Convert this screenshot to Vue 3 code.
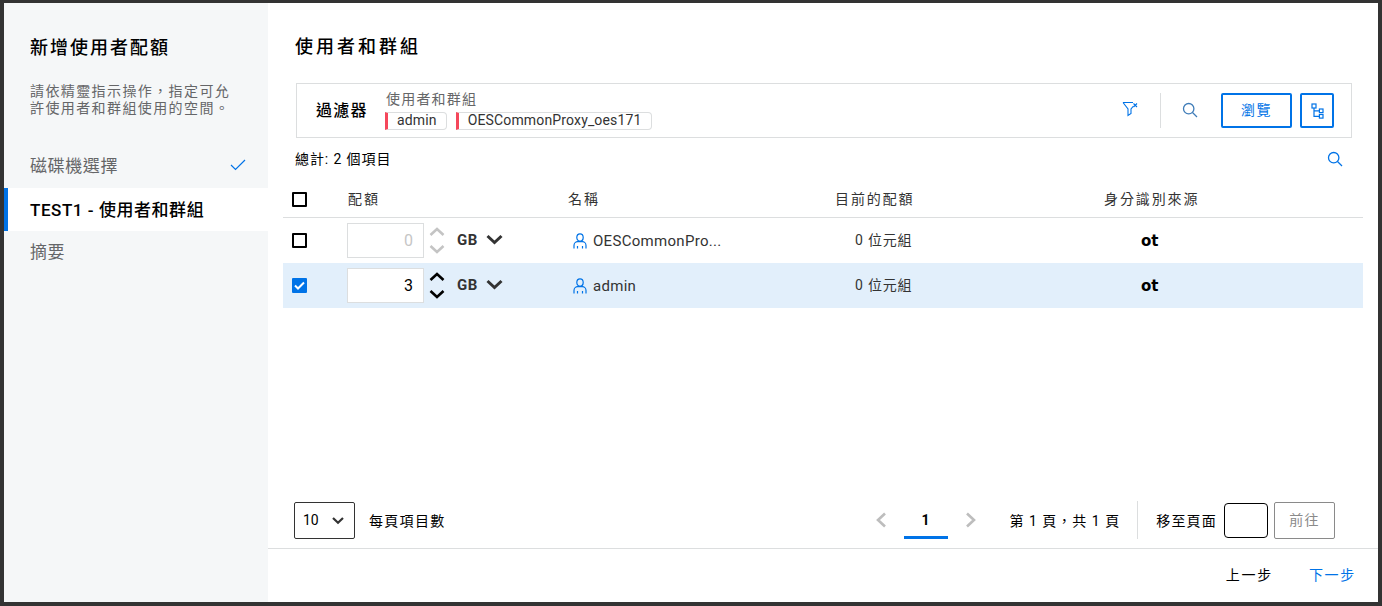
<template>
  <div class="backdrop">
    <div class="modal">
      <aside class="side">
        <h2 class="side-title">新增使用者配額</h2>
        <p class="side-desc">請依精靈指示操作，指定可允許使用者和群組使用的空間。</p>
        <nav class="steps">
          <div class="step">
            <span>磁碟機選擇</span>
            <svg class="step-check" width="16" height="12" viewBox="0 0 16 12"><path d="M1 6 L5.5 10.5 L15 1" fill="none" stroke="#0073e7" stroke-width="1.2"/></svg>
          </div>
          <div class="step active">TEST1 - 使用者和群組</div>
          <div class="step">摘要</div>
        </nav>
      </aside>

      <main class="main">
        <div class="content">
          <h1 class="title">使用者和群組</h1>

          <div class="filter">
            <div class="filter-label">過濾器</div>
            <div class="filter-body">
              <div class="filter-name">使用者和群組</div>
              <div class="chips">
                <span v-for="c in chips" :key="c" class="chip">{{ c }}</span>
              </div>
            </div>
            <div class="filter-tools">
              <svg class="tool-funnel" width="16" height="16" viewBox="0 0 16 16" fill="none" stroke="#0073e7" stroke-width="1.1">
                <path d="M1 1.5 H11 M1 1.5 L6 8 V14.5 L9 12.5 V8 L11.5 5"/>
                <path d="M11.5 2.5 L15 6 M15 2.5 L11.5 6"/>
              </svg>
              <span class="tool-sep"></span>
              <svg class="tool-search" width="16" height="16" viewBox="0 0 16 16" fill="none" stroke="#3f7cb8" stroke-width="1.3">
                <circle cx="6.7" cy="6.7" r="5.2"/><path d="M10.5 10.5 L15 15"/>
              </svg>
              <button class="btn-outline browse">瀏覽</button>
              <button class="btn-outline tree">
                <svg width="13" height="16" viewBox="0 0 13 16" fill="none" stroke="#0073e7" stroke-width="1.2">
                  <rect x="1" y="1" width="4" height="4"/><rect x="8.4" y="6" width="3.6" height="3.6"/><rect x="8.4" y="11.5" width="3.6" height="3.6"/>
                  <path d="M3 5 V13.3 H8.4 M3 7.8 H8.4"/>
                </svg>
              </button>
            </div>
          </div>

          <div class="count-row">
            <span>總計: 2 個項目</span>
            <svg width="16" height="16" viewBox="0 0 16 16" fill="none" stroke="#0073e7" stroke-width="1.3">
              <circle cx="6.7" cy="6.7" r="5.2"/><path d="M10.5 10.5 L15 15"/>
            </svg>
          </div>

          <div class="table">
            <div class="row head">
              <div class="c-check"><span class="box"></span></div>
              <div class="c-quota">配額</div>
              <div class="c-name">名稱</div>
              <div class="c-current">目前的配額</div>
              <div class="c-source">身分識別來源</div>
            </div>
            <div v-for="r in rows" :key="r.name" class="row" :class="{ selected: r.checked }">
              <div class="c-check">
                <span class="box" :class="{ on: r.checked }">
                  <svg v-if="r.checked" width="11" height="9" viewBox="0 0 11 9"><path d="M1 4.5 L4 7.5 L10 1.5" fill="none" stroke="#fff" stroke-width="2"/></svg>
                </span>
              </div>
              <div class="c-quota quota">
                <span class="num" :class="{ off: !r.checked }">{{ r.quota }}</span>
                <span class="spin" :class="{ off: !r.checked }">
                  <svg width="16" height="10" viewBox="0 0 16 10"><path d="M1.5 8 L8 2 L14.5 8" fill="none" stroke="currentColor" stroke-width="2.6"/></svg>
                  <svg width="16" height="10" viewBox="0 0 16 10"><path d="M1.5 2 L8 8 L14.5 2" fill="none" stroke="currentColor" stroke-width="2.6"/></svg>
                </span>
                <span class="unit">GB</span>
                <svg class="unit-arrow" width="17" height="11" viewBox="0 0 17 11"><path d="M1.5 2 L8.5 8.5 L15.5 2" fill="none" stroke="#333" stroke-width="3"/></svg>
              </div>
              <div class="c-name name">
                <svg width="14" height="16" viewBox="0 0 14 16" fill="none" stroke="#0073e7" stroke-width="1.2">
                  <ellipse cx="7" cy="4.5" rx="3.2" ry="3.7"/>
                  <path d="M1 15.5 V12.5 C1 10 3 8.6 4.6 8.6 H9.4 C11 8.6 13 10 13 12.5 V15.5 M4.5 15.5 V13 M9.5 15.5 V13"/>
                </svg>
                <span>{{ r.name }}</span>
              </div>
              <div class="c-current used">0 位元組</div>
              <div class="c-source source">ot</div>
            </div>
          </div>

          <div class="pager">
            <div class="per-page">
              <div class="select">
                <span>10</span>
                <svg width="14" height="9" viewBox="0 0 14 9"><path d="M2 2 L7 6.8 L12 2" fill="none" stroke="#333" stroke-width="2.2"/></svg>
              </div>
              <span>每頁項目數</span>
            </div>
            <div class="pages">
              <svg width="12" height="16" viewBox="0 0 12 16"><path d="M10 1.5 L3 8 L10 14.5" fill="none" stroke="#bdbdbd" stroke-width="2.6"/></svg>
              <span class="page-cur">1</span>
              <svg width="12" height="16" viewBox="0 0 12 16"><path d="M2 1.5 L9 8 L2 14.5" fill="none" stroke="#bdbdbd" stroke-width="2.6"/></svg>
              <span class="page-of">第 1 頁，共 1 頁</span>
              <span class="page-sep"></span>
              <span class="goto-label">移至頁面</span>
              <span class="goto-input"></span>
              <button class="goto-btn">前往</button>
            </div>
          </div>
        </div>

        <footer class="foot">
          <span class="back">上一步</span>
          <span class="next">下一步</span>
        </footer>
      </main>
    </div>
  </div>
</template>

<script setup>
const chips = ['admin', 'OESCommonProxy_oes171']

const rows = [
  { name: 'OESCommonPro...', quota: 0, checked: false },
  { name: 'admin', quota: 3, checked: true }
]
</script>

<style>
html, body { margin: 0; }
</style>

<style scoped>
.backdrop {
  width: 1382px;
  height: 606px;
  box-sizing: border-box;
  padding: 3px 4px 4px 4px;
  background: #333;
  font-family: Roboto, "Noto Sans CJK TC", sans-serif;
  font-size: 14px;
  color: #000;
  overflow: hidden;
}
.modal {
  display: flex;
  height: 599px;
  background: #fff;
}
.side {
  width: 264px;
  flex-shrink: 0;
  background: #f5f7f8;
}
.side-title {
  margin: 33px 0 0 26px;
  font-size: 18px;
  line-height: 24px;
  font-weight: 500;
  letter-spacing: 2px;
}
.side-desc {
  margin: 23px 30px 0 26px;
  font-size: 14px;
  line-height: 17px;
  letter-spacing: 1.4px;
  color: #656668;
}
.steps { margin-top: 28px; }
.step {
  box-sizing: border-box;
  display: flex;
  align-items: center;
  justify-content: space-between;
  height: 43px;
  padding: 0 22px 4px 26px;
  font-size: 17px;
  letter-spacing: .6px;
  color: #656668;
}
.step.active {
  background: #fff;
  border-left: 4px solid #0073e7;
  padding: 0 22px 2px 22px;
  font-weight: 500;
  letter-spacing: .55px;
  color: #000;
}
.step-check { margin-top: 1px; }

.main {
  flex: 1;
  display: flex;
  flex-direction: column;
  min-width: 0;
}
.content {
  flex: 1;
  display: flex;
  flex-direction: column;
  padding: 0 15px;
}
.title {
  margin: 32px 0 0 12px;
  font-size: 18px;
  line-height: 24px;
  font-weight: 500;
  letter-spacing: 3px;
}
.filter {
  display: flex;
  align-items: center;
  box-sizing: border-box;
  height: 55px;
  margin: 24px 11px 0 13px;
  border: 1px solid #dcdedf;
}
.filter-label {
  width: 69px;
  padding: 0 0 3px 19px;
  font-size: 16px;
  font-weight: 500;
  letter-spacing: 1.2px;
  flex-shrink: 0;
}
.filter-body {
  display: flex;
  flex-direction: column;
  align-self: flex-start;
  margin-top: 6px;
}
.filter-name {
  font-size: 14px;
  line-height: 18px;
  color: #656668;
  letter-spacing: 1.2px;
  padding-left: 1px;
  margin-bottom: 4px;
}
.chips { display: flex; gap: 9px; }
.chip {
  box-sizing: border-box;
  height: 18px;
  line-height: 14px;
  padding: 0 9px;
  border: 1px solid #dcdedf;
  border-left: 3px solid #f5475b;
  border-radius: 0 4px 4px 0;
  font-size: 14px;
  letter-spacing: .15px;
  color: #333;
}
.filter-tools {
  margin-left: auto;
  display: flex;
  align-items: center;
  padding-right: 17px;
}
.tool-funnel { margin-top: -3px; }
.tool-sep {
  width: 1px;
  height: 35px;
  margin: 0 21px 0 22px;
  background: #dcdedf;
}
.tool-search { margin: -2px 23px 0 0; }
.btn-outline {
  box-sizing: border-box;
  height: 35px;
  padding: 0 0 3px;
  background: #fff;
  border: 2px solid #0073e7;
  border-radius: 2px;
  color: #0073e7;
  font: inherit;
  letter-spacing: 1.6px;
}
.browse { width: 71px; margin-right: 8px; }
.tree {
  width: 34px;
  padding: 0;
  display: flex;
  align-items: center;
  justify-content: center;
}
.count-row {
  display: flex;
  align-items: center;
  justify-content: space-between;
  height: 20px;
  margin: 11px 20px 0 12px;
  font-size: 14px;
  line-height: 20px;
  letter-spacing: .9px;
}
.table { margin-top: 13px; }
.row {
  display: flex;
  align-items: center;
  height: 45px;
  color: #333;
}
.row.head {
  height: 35px;
  border-bottom: 1px solid #dcdedf;
  letter-spacing: 1.9px;
}
.head .c-quota, .head .c-name, .head .c-current, .head .c-source { margin-bottom: 3px; }
.row.selected { background: #e2effb; }
.c-check {
  width: 64px;
  padding-left: 9px;
  box-sizing: border-box;
  display: flex;
  flex-shrink: 0;
}
.c-quota { width: 221px; flex-shrink: 0; }
.c-name { width: 254px; flex-shrink: 0; }
.c-current { width: 282px; flex-shrink: 0; }
.c-source { flex: 1; }
.head .c-quota { padding-left: 1px; box-sizing: border-box; }
.head .c-current { padding-left: 13px; box-sizing: border-box; }
.box {
  box-sizing: border-box;
  width: 15px;
  height: 15px;
  border: 2px solid #000;
  border-radius: 1px;
  background: #fff;
  display: flex;
  align-items: center;
  justify-content: center;
}
.box.on { background: #0073e7; border-color: #0073e7; }
.quota { display: flex; align-items: center; }
.num {
  box-sizing: border-box;
  width: 77px;
  height: 35px;
  line-height: 33px;
  padding-right: 10px;
  text-align: right;
  background: #fff;
  border: 1px solid #dcdedf;
  font-size: 16px;
  color: #000;
}
.num.off { color: #c6c6c6; }
.spin {
  display: flex;
  flex-direction: column;
  gap: 7px;
  margin: 0 12px 0 5px;
  color: #000;
}
.spin.off { color: #c4c4c4; }
.spin svg { display: block; }
.unit {
  font-size: 15px;
  font-weight: 700;
  letter-spacing: .6px;
  color: #333;
  margin: -2px 8px 0 0;
}
.unit-arrow { margin-top: -2px; }
.name {
  box-sizing: border-box;
  display: flex;
  align-items: center;
  gap: 6px;
  padding-left: 5px;
  font-size: 15px;
  letter-spacing: .3px;
}
.used {
  box-sizing: border-box;
  padding-left: 33px;
  margin-bottom: 4px;
  letter-spacing: .8px;
}
.source {
  padding-left: 37px;
  font-family: "DejaVu Sans", sans-serif;
  font-weight: 700;
  font-size: 15px;
  color: #000;
}

.pager {
  margin-top: auto;
  margin-bottom: 9px;
  display: flex;
  align-items: center;
  justify-content: space-between;
  padding: 0 28px 0 11px;
  height: 38px;
  letter-spacing: 1.3px;
}
.per-page { display: flex; align-items: center; gap: 14px; }
.select {
  box-sizing: border-box;
  width: 61px;
  height: 37px;
  border: 1px solid #333;
  border-radius: 2px;
  display: flex;
  align-items: center;
  justify-content: space-between;
  padding: 0 9px 0 8px;
  font-size: 14px;
  letter-spacing: 0;
}
.pages { display: flex; align-items: center; }
.page-cur {
  width: 44px;
  height: 37px;
  box-sizing: border-box;
  margin: 0 17px;
  text-align: center;
  line-height: 37px;
  font-weight: 700;
  letter-spacing: 0;
  border-bottom: 3px solid #0073e7;
}
.page-of { margin: 0 17px 0 33px; letter-spacing: 1px; }
.page-sep { width: 1px; height: 38px; background: #dcdedf; margin-right: 18px; }
.goto-label { margin-right: 7px; letter-spacing: 1.2px; }
.goto-input {
  box-sizing: border-box;
  width: 44px;
  height: 35px;
  border: 1px solid #000;
  border-radius: 4px;
  margin-right: 6px;
}
.goto-btn {
  box-sizing: border-box;
  width: 61px;
  height: 37px;
  padding: 0 0 3px;
  background: #fff;
  border: 1px solid #8a8a8a;
  border-radius: 2px;
  color: #8a8a8a;
  font: inherit;
  letter-spacing: 1.2px;
}
.foot {
  box-sizing: border-box;
  height: 54px;
  flex-shrink: 0;
  border-top: 1px solid #dcdedf;
  display: flex;
  align-items: center;
  justify-content: flex-end;
  gap: 36px;
  padding: 0 22px 4px 0;
  letter-spacing: 1.7px;
}
.back { color: #000; }
.next { color: #0073e7; }
</style>
